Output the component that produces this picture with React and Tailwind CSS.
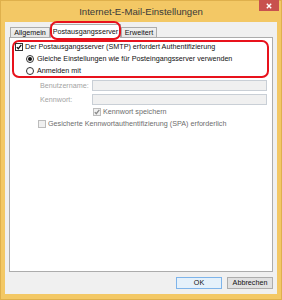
import React from 'react';

const font = { fontFamily: '"Liberation Sans", Arial, sans-serif' };

const CheckBox = ({ checked, disabled }) => (
  <svg width="8" height="8" viewBox="0 0 8 8" className="shrink-0">
    <rect x="0.5" y="0.5" width="7" height="7" fill={disabled ? '#f0f0f0' : '#fff'} stroke={disabled ? '#bcbcbc' : '#333'} />
    {checked && (
      <path d="M1.8 4.1 L3.3 5.7 L6.3 1.9" fill="none" stroke={disabled ? '#8a8a8a' : '#111'} strokeWidth="1.3" />
    )}
  </svg>
);

const Radio = ({ checked }) => (
  <svg width="8" height="8" viewBox="0 0 8 8" className="shrink-0">
    <circle cx="4" cy="4" r="3.5" fill="#fff" stroke="#333" />
    {checked && <circle cx="4" cy="4" r="2" fill="#111" />}
  </svg>
);

export default function App() {
  return (
    <div
      style={font}
      className="flex h-[300px] w-[282px] flex-col border border-[#dfb04c] bg-[#f3c865] text-[7.2px] leading-none text-[#111]"
    >
      {/* Title bar */}
      <div className="grid h-[21px] grid-cols-[1fr_auto_1fr]">
        <div />
        <div className="self-center pt-[1px] text-[9.6px] text-[#3a3a3a]">Internet-E-Mail-Einstellungen</div>
        <div className="flex justify-end">
          <div className="mr-[2px] flex h-[11px] w-[20px] items-center justify-center bg-[#c8514e] -mt-px">
            <svg width="6" height="6" viewBox="0 0 6 6">
              <path d="M0.8 0.8 L5.2 5.2 M5.2 0.8 L0.8 5.2" stroke="#fff" strokeWidth="1.4" />
            </svg>
          </div>
        </div>
      </div>

      {/* Dialog body */}
      <div className="mx-[4px] mb-[5px] flex flex-1 flex-col bg-[#f0f0f0] px-[4px] pb-[5px]">
        {/* Tabs */}
        <div className="ml-[1px] flex h-[15px] items-end">
          <div className="flex h-[10px] w-[40px] items-center justify-center border border-b-0 border-[#acacac] bg-gradient-to-b from-[#f0f0f0] to-[#e5e5e5]">
            Allgemein
          </div>
          <div className="relative z-10 -mb-px flex h-[14px] w-[71px] items-center justify-center border border-b-0 border-[#acacac] bg-white">
            Postausgangsserver
            <div className="absolute -top-[4px] -bottom-[2px] -left-[1px] -right-[1px] rounded-[7px] border-2 border-[#e8121c]" />
          </div>
          <div className="flex h-[10px] w-[36px] items-center justify-center border border-b-0 border-[#acacac] bg-gradient-to-b from-[#f0f0f0] to-[#e5e5e5]">
            Erweitert
          </div>
        </div>

        {/* Panel */}
        <div className="flex flex-1 flex-col border border-[#acacac] bg-white">
          <div className="mx-[2px] mt-[2px] mr-[3px] flex flex-col gap-[2px] rounded-[7px] border-2 border-[#e8121c]">
            <div className="flex h-[10px] items-center gap-[2px] pl-[1px]">
              <CheckBox checked />
              <span>Der Postausgangsserver (SMTP) erfordert Authentifizierung</span>
            </div>
            <div className="flex h-[10px] items-center gap-[3px] pl-[12px]">
              <Radio checked />
              <span>Gleiche Einstellungen wie für Posteingangsserver verwenden</span>
            </div>
            <div className="flex h-[10px] items-center gap-[3px] pl-[12px]">
              <Radio />
              <span>Anmelden mit</span>
            </div>
          </div>

          <div className="mt-[2px] mr-[5px] flex h-[11px] items-center pl-[30px] text-[#a3a3a3]">
            <span className="w-[52px]">Benutzername:</span>
            <div className="h-full flex-1 border border-[#c9cfd6] bg-[#f0f0f0]" />
          </div>
          <div className="mt-[3px] mr-[5px] flex h-[11px] items-center pl-[30px] text-[#a3a3a3]">
            <span className="w-[52px]">Kennwort:</span>
            <div className="h-full flex-1 border border-[#c9cfd6] bg-[#f0f0f0]" />
          </div>
          <div className="mt-[2px] flex h-[10px] items-center gap-[2px] pl-[83px]">
            <CheckBox checked disabled />
            <span className="text-[#6d6d6d]">Kennwort speichern</span>
          </div>
          <div className="mt-[2px] flex h-[10px] items-center gap-[2px] pl-[28px]">
            <CheckBox disabled />
            <span className="text-[#6d6d6d]">Gesicherte Kennwortauthentifizierung (SPA) erforderlich</span>
          </div>
        </div>

        {/* Buttons */}
        <div className="mt-[5px] flex justify-end gap-[5px]">
          <button className="flex h-[12px] w-[46px] items-center justify-center border border-[#7eb4ea] bg-[#e5f1fb]">
            OK
          </button>
          <button className="flex h-[12px] w-[46px] items-center justify-center border border-[#adadad] bg-[#e1e1e1]">
            Abbrechen
          </button>
        </div>
      </div>
    </div>
  );
}
